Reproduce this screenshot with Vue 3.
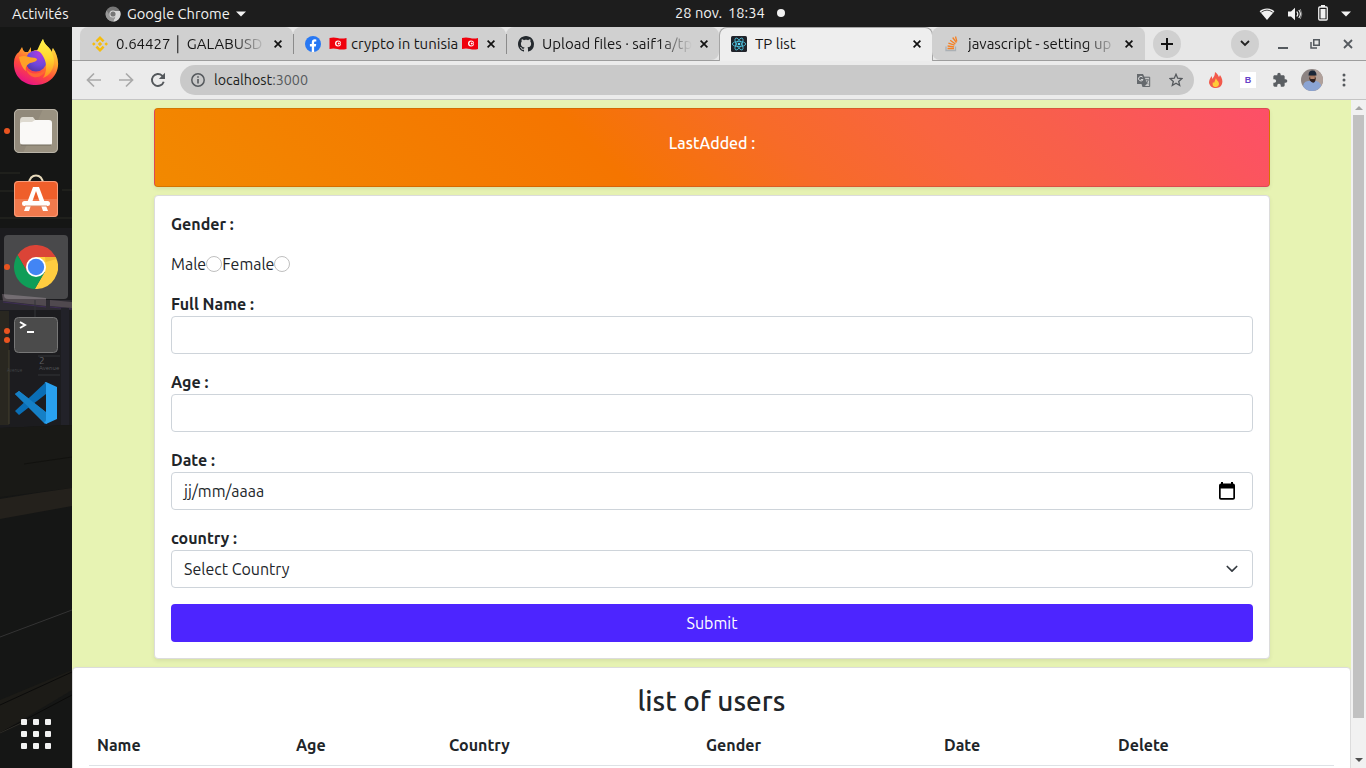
<script setup>
const tabs = [
  { icon: 'binance', title: '0.64427 │ GALABUSD' },
  { icon: 'facebook', title: 'crypto in tunisia', flags: true },
  { icon: 'github', title: 'Upload files · saif1a/tp' },
  { icon: 'react', title: 'TP list', active: true },
  { icon: 'stack', title: 'javascript - setting up' }
]

const columns = [
  { label: 'Name', col: 'c1' },
  { label: 'Age', col: 'c2' },
  { label: 'Country', col: 'c3' },
  { label: 'Gender', col: 'c4' },
  { label: 'Date', col: 'c5' },
  { label: 'Delete', col: 'c6' }
]
</script>

<template>
  <div class="desktop">
    <header class="topbar">
      <span class="activities">Activités</span>
      <svg class="app-icon" width="16" height="16" viewBox="0 0 16 16">
        <circle cx="8" cy="8" r="7.5" fill="#777" />
        <path d="M8 5H15A7.5 7.5 0 0 1 8 15.5L11 9.5z" fill="#d8d8d8" />
        <path d="M1.5 4.5A7.5 7.5 0 0 0 8 15.5L10.5 10 5 9.5z" fill="#999" />
        <circle cx="8" cy="8" r="3.6" fill="#ddd" />
        <circle cx="8" cy="8" r="2.6" fill="#777" />
      </svg>
      <span class="app-name">Google Chrome</span>
      <svg class="app-caret" width="10" height="6" viewBox="0 0 10 6"><path d="M0 .5h10L5 5.5z" fill="#f2f2f2" /></svg>
      <div class="clock">
        <span>28 nov.</span>
        <span class="time">18:34</span>
        <i class="notice"></i>
      </div>
      <div class="tray">
        <svg width="16" height="14" viewBox="0 0 16 14">
          <path d="M.6 4.2C4.7.7 11.3.7 15.4 4.2L8 13z" fill="#f2f2f2" />
          <path d="M2.3 5.2Q8 1 13.7 5.2" fill="none" stroke="#1d1d1d" stroke-width=".8" />
        </svg>
        <svg class="speaker" width="16" height="14" viewBox="0 0 16 14">
          <path d="M1 4.5h3L8 .8v12.4L4 9.5H1z" fill="#f2f2f2" />
          <path d="M9.8 4.5q2 2.500 0 5M11.8 3q3.200 4 0 8" fill="none" stroke="#f2f2f2" stroke-width="1.2" />
          <path d="M13.3 2q3 5 0 10" fill="none" stroke="#888" />
        </svg>
        <svg class="battery" width="10" height="16" viewBox="0 0 10 16">
          <path d="M3 0h4v2H3z" fill="#f2f2f2" />
          <rect x=".75" y="2" width="8.5" height="13" rx="1" fill="none" stroke="#f2f2f2" stroke-width="1.3" />
          <path d="M2.500 4h5v9.500h-5z" fill="#f2f2f2" />
        </svg>
        <svg width="10" height="6" viewBox="0 0 10 6"><path d="M0 .5h10L5 5.5z" fill="#f2f2f2" /></svg>
      </div>
    </header>

    <div class="main">
      <aside class="dock">
        <svg class="wallpaper" width="72" height="741" viewBox="0 27 72 741">
          <rect y="27" width="72" height="741" fill="#151615" />
          <path d="M0 173h20M0 191h16M62 190h10M0 218h72" stroke="#2b2a25" />
          <path d="M0 228H72V425L0 428z" fill="#1c1c1f" />
          <path d="M0 300h72v10H0z" fill="#2d2b31" />
          <path d="M2 294l44 4v8L3 301zM50 300l22 2v6l-22-2z" fill="#50494f" />
          <path d="M3 302l43 5M50 307l22 2" stroke="#3e2d56" />
          <path d="M0 311h9v114H0z" fill="#292720" />
          <path d="M9 350V424" stroke="#45402e" />
          <path d="M61 308h8v117h-8z" fill="#222229" />
          <path d="M35 300v17M38 356h22M38 375h22" stroke="#333439" />
          <text x="39" y="364" font-size="10" fill="#5c5e62">2</text>
          <text x="39" y="370" font-size="6" fill="#54575b">Avenue</text>
          <text x="7" y="372" font-size="4.5" fill="#434548">Avenue</text>
          <path d="M0 428l72-3v63L0 497z" fill="#191916" />
          <path d="M24 464l48-7" stroke="#12120f" />
          <path d="M0 499q35-6 72-11v18L0 519z" fill="#24211c" />
          <path d="M0 637l72-27" stroke="#343434" />
          <path d="M0 700l72-30v20L0 733z" fill="#1c1b17" />
          <path d="M0 705l72-33M0 733l72-38" stroke="#0c0c0b" />
          <path d="M0 733l30-14" stroke="#2e2c27" />
        </svg>
        <div class="launchers">
          <div class="launcher">
            <svg class="firefox" width="46" height="48" viewBox="0 0 46 48">
              <defs>
                <linearGradient id="fxBody" x1=".8" y1="0" x2=".3" y2="1">
                  <stop offset="0" stop-color="#fff04a" /><stop offset=".38" stop-color="#ffa52c" />
                  <stop offset=".68" stop-color="#ff493c" /><stop offset="1" stop-color="#e6108a" />
                </linearGradient>
                <radialGradient id="fxGlobe" cx=".7" cy=".15" r=".9">
                  <stop offset="0" stop-color="#b13ae0" /><stop offset=".6" stop-color="#7047dc" /><stop offset="1" stop-color="#5538a8" />
                </radialGradient>
                <linearGradient id="fxTail" x1=".5" y1="0" x2=".5" y2="1">
                  <stop offset="0" stop-color="#fff34d" /><stop offset=".5" stop-color="#ffd52e" /><stop offset="1" stop-color="#ff8a20" />
                </linearGradient>
              </defs>
              <path d="M9 9c1 2 1 4 3 5l3 0 3-5v5q5-3 9-2C27 7 28 4 30 1c1 6 7 8 9 13 0-2 0-3 1-4 5 7 7 17 3 25-4 8-12 12-20 12C9 47 0 37 1 24c0-4 2-8 5-10z" fill="url(#fxBody)" />
              <circle cx="23" cy="23" r="10.5" fill="url(#fxGlobe)" />
              <path d="M24 13c2-5 4-9 6-12 1 6 7 8 9 14 5 10 0 22-9 25 4-6 4-14 1-20-2-4-4-7-7-7z" fill="url(#fxTail)" />
              <path d="M6 19q5-2 10 0c3 1 6 0 8 2 0 3-4 3-7 4-3 2-5 4-4 8-4-3-6-9-7-14z" fill="#ffa027" />
              <path d="M13 31c4 5 12 7 20 0-3 10-16 12-20 0z" fill="#ff6634" />
            </svg>
          </div>
          <div class="launcher">
            <i class="dot"></i>
            <svg width="46" height="46" viewBox="0 0 46 46">
              <rect x="1" y="1" width="44" height="44" rx="5" fill="#91897a" />
              <path d="M30 1h10q5 0 5 5v34q0 5-5 5H10z" fill="#a09786" opacity=".6" />
              <rect x="1.5" y="1.5" width="43" height="43" rx="4.5" fill="none" stroke="#b9b4a8" />
              <path d="M7 13q0-4 3-4h10l3 4h12v12H7z" fill="#dedad0" />
              <path d="M7 16q0-2 3-2h9l3-2h14q3 0 3 3v20q0 2-3 2H10q-3 0-3-3z" fill="#faf9f7" />
              <path d="M8 37h30" stroke="#716a5d" />
            </svg>
          </div>
          <div class="launcher">
            <svg class="software" width="46" height="46" viewBox="0 0 46 46">
              <path d="M16 11C16-.5 30-.5 30 11" fill="none" stroke="#e7dabb" stroke-width="2" />
              <rect x="1" y="8" width="44" height="36" rx="4" fill="#ef5f2b" />
              <path d="M1 26h44v14q0 4-4 4H5q-4 0-4-4z" fill="#f17a4d" />
              <rect x="1.5" y="8.5" width="43" height="35" rx="3.5" fill="none" stroke="#f79d7b" />
              <path d="M20 14h6l9 24h-5L23 18 16 38h-5z" fill="#fff" />
              <rect x="9" y="28" width="28" height="5" rx="2.5" fill="#fff" />
              <path d="M12 33h22" stroke="#dc8865" />
            </svg>
          </div>
          <div class="launcher focused">
            <i class="dot"></i>
            <svg width="44" height="44" viewBox="0 0 44 44">
              <path d="M3.54 10.03A22 22 0 0 1 41.6 12H22v10l-8.66 5z" fill="#db4437" />
              <path d="M41.6 12A22 22 0 0 1 20.86 43.97L30.66 27 22 22V12z" fill="#ffcd40" />
              <path d="M20.86 43.97A22 22 0 0 1 3.54 10.03L13.34 27 22 22l8.66 5z" fill="#0f9d58" />
              <path d="M31 12h10.6l1 2-11 3z" fill="#e5a92b" opacity=".6" />
              <circle cx="22" cy="22" r="10" fill="#fff" />
              <circle cx="22" cy="22" r="8.2" fill="#4285f4" />
            </svg>
          </div>
          <div class="launcher">
            <i class="dot upper"></i><i class="dot lower"></i>
            <svg width="46" height="46" viewBox="0 0 46 46">
              <rect x="1.5" y="5.5" width="43" height="35" rx="4" fill="#4b4b4b" stroke="#777" />
              <path d="M7 10l5 3-5 3" fill="none" stroke="#fff" stroke-width="2" />
              <path d="M14 20h7" stroke="#fff" stroke-width="2" />
            </svg>
          </div>
          <div class="launcher">
            <svg width="44" height="44" viewBox="0 0 44 44">
              <path d="M1 13l4-3 28 22-2 11z" fill="#1d83cb" />
              <path d="M1 30l4 4 27-21V1z" fill="#0a6eb5" />
              <path d="M1 13l4-3 28 22v11q-2 0-3-2z" fill="#1580c6" />
              <path d="M32 1l11 5v32l-11 5-2-2q2 0 2-2V4q0-3-2-2z" fill="#29a1ef" />
            </svg>
          </div>
        </div>
        <div class="app-grid"><i v-for="n in 9" :key="n"></i></div>
      </aside>

      <section class="browser">
        <div class="tabstrip">
          <div v-for="tab in tabs" :key="tab.icon" class="tab" :class="{ active: tab.active }">
            <svg v-if="tab.icon === 'binance'" width="16" height="16" viewBox="0 0 16 16" fill="#f5bc0c">
              <path d="M8 0l4.500 4.500-1.800 1.800L8 3.600 5.300 6.300 3.500 4.500zM8 16l4.500-4.500-1.800-1.800L8 12.400 5.300 9.700l-1.800 1.800zM1.800 6.200L3.600 8 1.800 9.800 0 8zM14.200 6.200L16 8l-1.800 1.800L12.400 8zM8 5.800L10.200 8 8 10.200 5.800 8z" />
            </svg>
            <svg v-else-if="tab.icon === 'facebook'" width="16" height="16" viewBox="0 0 16 16">
              <circle cx="8" cy="8" r="8" fill="#2878f3" />
              <path d="M6.800 16v-5.500H4.900V8h1.900V6.400c0-2 1.200-3.100 3-3.100l1.500.1v2h-1c-.9 0-1.200.5-1.200 1.200V8h2.100l-.4 2.500H9.100V16z" fill="#fff" />
            </svg>
            <svg v-else-if="tab.icon === 'github'" width="16" height="16" viewBox="0 0 16 16">
              <path d="M8 0C3.580 0 0 3.580 0 8c0 3.540 2.290 6.530 5.470 7.590.4.070.55-.17.55-.38 0-.19-.01-.82-.01-1.490-2.010.37-2.530-.49-2.690-.94-.09-.23-.48-.94-.82-1.130-.28-.15-.68-.52-.01-.53.63-.01 1.080.58 1.230.82.72 1.210 1.870.87 2.330.66.07-.52.28-.87.51-1.070-1.780-.2-3.640-.89-3.640-3.950 0-.87.31-1.590.82-2.150-.08-.2-.36-1.020.08-2.120 0 0 .67-.21 2.200.82.64-.18 1.320-.27 2-.27s1.360.09 2 .27c1.530-1.040 2.200-.82 2.200-.82.44 1.100.16 1.920.08 2.120.51.56.82 1.270.82 2.150 0 3.070-1.870 3.750-3.650 3.950.29.25.54.73.54 1.480 0 1.070-.01 1.930-.01 2.200 0 .21.15.46.55.38A8.010 8.010 0 0 0 16 8c0-4.420-3.580-8-8-8z" fill="#24292e" />
            </svg>
            <svg v-else-if="tab.icon === 'react'" width="16" height="16" viewBox="0 0 16 16">
              <rect width="16" height="16" rx="1.5" fill="#20232a" />
              <g fill="none" stroke="#4cc5e2" stroke-width=".8">
                <ellipse cx="8" cy="8" rx="6.7" ry="2.6" />
                <ellipse cx="8" cy="8" rx="6.7" ry="2.6" transform="rotate(60 8 8)" />
                <ellipse cx="8" cy="8" rx="6.7" ry="2.6" transform="rotate(120 8 8)" />
              </g>
              <circle cx="8" cy="8" r="1.3" fill="#61dafb" />
            </svg>
            <svg v-else width="16" height="16" viewBox="0 0 16 16" fill="none">
              <path d="M2 10.5v4h9.500v-4" stroke="#aab0b5" stroke-width="1.3" />
              <path d="M3.500 12.500H10M3.600 10l6.500.8M4.400 7.200l6.100 2M6.200 4.200l5.200 3.800M8.700 1.500l3.700 5.200M11.500.5l1.300 5" stroke="#f48024" stroke-width="1.3" />
            </svg>
            <div class="tab-title">
              <svg v-if="tab.flags" class="flag first" width="18" height="13" viewBox="0 0 18 13">
                <path d="M.5 1q4-1 8 0t9 0v11q-5 1-9 0t-8 0z" fill="#f0000c" />
                <circle cx="9" cy="6.5" r="3" fill="#fff" /><circle cx="9.400" cy="6.5" r="2" fill="#f0000c" /><circle cx="9.8" cy="6.5" r="1" fill="#fff" />
              </svg>
              <span>{{ tab.title }}</span>
              <svg v-if="tab.flags" class="flag last" width="16" height="13" viewBox="0 0 16 13">
                <path d="M0 1q4-1 8 0t8 0v11q-4 1-8 0t-8 0z" fill="#f0000c" />
                <circle cx="9" cy="6.5" r="3" fill="#fff" /><circle cx="9.400" cy="6.5" r="2" fill="#f0000c" /><circle cx="9.8" cy="6.5" r="1" fill="#fff" />
              </svg>
            </div>
            <svg class="close" width="8" height="8" viewBox="0 0 8 8"><path d="M.6.6l6.800 6.800M7.400.6L.6 7.400" stroke="#111" stroke-width="1.7" /></svg>
          </div>
          <div class="round new-tab">
            <svg width="12" height="12" viewBox="0 0 12 12"><path d="M6 0v12M0 6h12" stroke="#111" stroke-width="2" /></svg>
          </div>
          <div class="round tab-search">
            <svg width="10" height="7" viewBox="0 0 10 7"><path d="M1 1l4 4 4-4" fill="none" stroke="#222" stroke-width="1.8" /></svg>
          </div>
          <svg class="win minimize" width="10" height="10" viewBox="0 0 10 10"><path d="M0 9h10" stroke="#555a5f" stroke-width="2" /></svg>
          <svg class="win restore" width="10" height="10" viewBox="0 0 10 10">
            <path d="M3.750.75h5.500v5.500h-5.500zM1 3v6h6" fill="none" stroke="#555a5f" stroke-width="1.5" />
          </svg>
          <svg class="win" width="10" height="10" viewBox="0 0 10 10"><path d="M1 1l8 8M9 1L1 9" stroke="#555a5f" stroke-width="1.8" /></svg>
        </div>

        <div class="toolbar">
          <svg width="16" height="16" viewBox="0 0 16 16"><path d="M15 8H2M8 1.500L1.500 8 8 14.500" fill="none" stroke="#a9a9a9" stroke-width="1.7" /></svg>
          <svg width="16" height="16" viewBox="0 0 16 16"><path d="M1 8h13M8 1.500L14.500 8 8 14.500" fill="none" stroke="#a9a9a9" stroke-width="1.7" /></svg>
          <svg width="16" height="16" viewBox="0 0 16 16">
            <path d="M13.700 9.800a6 6 0 1 1-1.600-6.200l1.900 2" fill="none" stroke="#53575b" stroke-width="1.9" />
            <path d="M15 .8v6.200H8.800z" fill="#53575b" />
          </svg>
          <div class="omnibox">
            <svg width="14" height="14" viewBox="0 0 14 14"><circle cx="7" cy="7" r="6.2" fill="none" stroke="#55595d" stroke-width="1.5" /><path d="M7 6v4.500M7 3.300v1.500" stroke="#55595d" stroke-width="1.6" /></svg>
            <div class="url"><span class="host">localhost</span><span>:3000</span></div>
            <svg class="translate" width="15" height="15" viewBox="0 0 15 15">
              <path d="M1 1h6l1.500 3H13.500V14H6.500L5.500 11H1z" fill="#65696d" />
              <path d="M8.200 4.200h5.500v9.300H7.500l3-2.500z" fill="#c8c8c8" stroke="#65696d" />
              <path d="M6.700 4.200a2.300 2.300 0 1 0 .3 2.400H4.800" fill="none" stroke="#ddd" />
              <path d="M9 6.800h4M11 6v1M12.200 7q-1 3-3 4M9.800 8.500l2.700 2.500" fill="none" stroke="#65696d" stroke-width=".8" />
            </svg>
            <svg class="star" width="14" height="14" viewBox="0 0 14 14"><path d="M7 1.300l1.700 3.900 4.200.4-3.200 2.800 1 4.100L7 10.300l-3.700 2.200 1-4.100L1.100 5.600l4.200-.4z" fill="none" stroke="#55595d" stroke-width="1.3" /></svg>
          </div>
          <svg class="flame" width="14" height="16" viewBox="0 0 14 16">
            <path d="M6 0c4 3 3 4 4 5l1-2c2 3 3 6 2 9-1 3-4 4-6 4-4 0-6-2-7-5 0-3 1-5 3-7v3c2-2 3-4 3-7z" fill="#f2594b" />
            <path d="M7 6c0 2 3 3 3 6 0 2-2 3-3 3-3 0-4-2-3-5l1 1z" fill="#ffcb38" />
          </svg>
          <div class="ext-b">B</div>
          <svg class="puzzle" width="16" height="16" viewBox="0 0 24 24"><path d="M20.500 11H19V7c0-1.100-.9-2-2-2h-4V3.500a2.500 2.500 0 0 0-5 0V5H4c-1.100 0-2 .9-2 2v3.800h1.500a2.700 2.700 0 0 1 0 5.400H2V20c0 1.100.9 2 2 2h3.800v-1.500a2.700 2.700 0 0 1 5.400 0V22H17c1.100 0 2-.9 2-2v-4h1.500a2.500 2.500 0 0 0 0-5z" fill="#5a5e62" /></svg>
          <svg class="avatar" width="22" height="22" viewBox="0 0 22 22">
            <defs><clipPath id="face"><circle cx="11" cy="11" r="11" /></clipPath></defs>
            <g clip-path="url(#face)">
              <path d="M0 0h22v22H0z" fill="#8d8483" /><path d="M14 0h8v22h-8z" fill="#b1a19b" />
              <path d="M2 22q-1-10 5-10l8 0q6 1 6 10z" fill="#8ba4d4" />
              <ellipse cx="11.500" cy="8.500" rx="3.200" ry="4" fill="#9b6c55" />
              <path d="M7.500 6.500q0-5 4-5t4 5z" fill="#1b2637" />
              <path d="M8.300 8.500h6.400q0 6-3.200 5T8.300 8.500z" fill="#30211f" />
              <path d="M9.300 7.500h4.400v2.500H9.300z" fill="#b08068" />
            </g>
          </svg>
          <svg class="kebab" width="4" height="14" viewBox="0 0 4 14" fill="#55595d"><circle cx="2" cy="2" r="1.5" /><circle cx="2" cy="7" r="1.5" /><circle cx="2" cy="12" r="1.5" /></svg>
        </div>

        <div class="viewport">
          <main class="page">
            <div class="card banner">LastAdded :</div>

            <form class="card form">
              <div class="row"><b>Gender :</b></div>
              <div class="row"><span>Male</span><i class="radio"></i><span>Female</span><i class="radio"></i></div>
              <div class="field">
                <b>Full Name :</b>
                <div class="control"></div>
              </div>
              <div class="field">
                <b>Age :</b>
                <div class="control"></div>
              </div>
              <div class="field">
                <b>Date :</b>
                <div class="control">
                  <span>jj/mm/aaaa</span>
                  <svg class="calendar" width="16" height="18" viewBox="0 0 16 18"><path d="M2 0h2v1.500h8V0h2v1.500q2 0 2 2V16q0 1.800-2 1.800H2Q0 17.800 0 16V3.500q0-2 2-2zM1.700 6.500v9.600h12.600V6.500z" fill="#000" fill-rule="evenodd" /></svg>
                </div>
              </div>
              <div class="field">
                <b>country :</b>
                <div class="control">
                  <span>Select Country</span>
                  <svg class="chevron" width="16" height="16" viewBox="0 0 16 16"><path d="M3.300 5.500L8 10.200l4.700-4.700" fill="none" stroke="#343a40" stroke-width="1.7" stroke-linecap="round" stroke-linejoin="round" /></svg>
                </div>
              </div>
              <button type="button" class="submit">Submit</button>
            </form>

            <section class="card users">
              <h2>list of users</h2>
              <table>
                <thead>
                  <tr><th v-for="c in columns" :key="c.label" :class="c.col">{{ c.label }}</th></tr>
                </thead>
              </table>
            </section>
          </main>
          <div class="scrollbar">
            <svg width="8" height="4" viewBox="0 0 8 4"><path d="M0 4L4 0l4 4z" fill="#a3a3a3" /></svg>
            <div class="thumb"></div>
            <svg class="down" width="8" height="4" viewBox="0 0 8 4"><path d="M0 0l4 4 4-4z" fill="#505050" /></svg>
          </div>
        </div>
      </section>
    </div>
  </div>
</template>

<style>
body {
  overflow: hidden;
}
</style>

<style scoped>
* {
  box-sizing: border-box;
}
.desktop {
  width: 1366px;
  height: 768px;
  overflow: hidden;
  display: flex;
  flex-direction: column;
  font-family: "Ubuntu", "Open Sans", "Noto Sans", sans-serif;
  font-size: 16px;
  line-height: 24px;
  color: #212529;
}
span, b {
  white-space: nowrap;
  flex: none;
}
svg {
  display: block;
  flex: none;
}
.topbar {
  position: relative;
  height: 27px;
  flex: none;
  display: flex;
  align-items: center;
  padding: 0 15px 0 12px;
  background: #1d1d1d;
  color: #f2f2f2;
  font-size: 14.67px;
}
.activities {
  width: 58px;
}
.app-icon {
  margin-left: 35px;
}
.app-name {
  width: 104px;
  margin-left: 6px;
}
.app-caret {
  margin-left: 5px;
}
.clock {
  position: absolute;
  left: 675px;
  top: 1px;
  display: flex;
  align-items: center;
}
.clock span {
  width: 45px;
}
.clock .time {
  width: 36px;
  margin-left: 8px;
}
.notice {
  width: 8px;
  height: 8px;
  margin-left: 13px;
  border-radius: 50%;
  background: #f2f2f2;
}
.tray {
  margin-left: auto;
  display: flex;
  align-items: center;
}
.speaker {
  margin-left: 12px;
}
.battery {
  margin: 0 13px 1px 15px;
}
.main {
  flex: 1;
  min-height: 0;
  display: flex;
}
.dock {
  position: relative;
  width: 72px;
  flex: none;
}
.wallpaper {
  position: absolute;
  left: 0;
  top: 0;
}
.launchers {
  position: relative;
  padding-top: 2px;
}
.launcher {
  position: relative;
  height: 68px;
  display: flex;
  align-items: center;
  justify-content: center;
}
.firefox {
  margin-bottom: 2px;
}
.software {
  margin-top: -6px;
}
.focused::before {
  content: "";
  position: absolute;
  inset: 2px 4px;
  border-radius: 4px;
  background: rgba(255, 255, 255, 0.2);
}
.focused svg {
  position: relative;
}
.dot {
  position: absolute;
  left: 4px;
  top: 31px;
  width: 6px;
  height: 6px;
  border-radius: 50%;
  background: #e95420;
}
.dot.upper {
  top: 27px;
}
.dot.lower {
  top: 36px;
}
.app-grid {
  position: absolute;
  left: 21px;
  bottom: 19px;
  display: grid;
  grid-template-columns: repeat(3, 6px);
  gap: 6px;
}
.app-grid i {
  height: 6px;
  border-radius: 1px;
  background: #f2f2f2;
}
.browser {
  flex: 1;
  min-width: 0;
  display: flex;
  flex-direction: column;
}
.tabstrip {
  height: 34px;
  flex: none;
  display: flex;
  align-items: center;
  padding: 0 13px 0 8px;
  background: #e7e7e7;
  border-bottom: 1px solid #9d9d9d;
}
.tab {
  position: relative;
  width: 213px;
  height: 33px;
  flex: none;
  display: flex;
  align-items: center;
  padding: 0 11px 0 12px;
  background: #d0d0d0;
  border-radius: 8px 8px 0 0;
  font-size: 15px;
  color: #161616;
}
.tab:nth-child(2)::before,
.tab:nth-child(3)::before {
  content: "";
  position: absolute;
  left: 0;
  top: 7px;
  width: 1px;
  height: 20px;
  background: #8b8b8b;
}
.tab:nth-child(3) {
  border-bottom-right-radius: 8px;
}
.tab:nth-child(5) {
  border-bottom-left-radius: 8px;
  padding-right: 12px;
}
.tab.active {
  width: 214px;
  height: 34px;
  margin-right: -1px;
  margin-bottom: -1px;
  background: #eee;
  border: 1px solid #a5a5a5;
  border-bottom: 0;
  padding: 0 11px 2px;
}
.tab-title {
  display: flex;
  align-items: center;
  width: 150px;
  margin-left: 8px;
  overflow: hidden;
  -webkit-mask-image: linear-gradient(90deg, #000 78%, transparent);
  mask-image: linear-gradient(90deg, #000 78%, transparent);
}
.tab:nth-child(2) .tab-title,
.tab.active .tab-title {
  width: 152px;
  -webkit-mask-image: none;
  mask-image: none;
}
.flag.first {
  margin-right: 4px;
}
.flag.last {
  margin-left: 4px;
}
.close {
  margin-left: auto;
}
.round {
  width: 28px;
  height: 28px;
  flex: none;
  border-radius: 50%;
  background: #d0d0d0;
  display: flex;
  align-items: center;
  justify-content: center;
}
.new-tab {
  margin-left: 8px;
}
.tab-search {
  margin-left: auto;
}
.win {
  margin-left: 23px;
}
.minimize {
  margin-left: 19px;
}
.restore {
  margin-left: 22px;
}
.toolbar {
  height: 39px;
  flex: none;
  display: flex;
  align-items: center;
  padding: 0 20px 0 14px;
  background: #ebebeb;
  border-bottom: 1px solid #c4c4c4;
}
.toolbar > svg:nth-child(2),
.toolbar > svg:nth-child(3) {
  margin-left: 16px;
}
.omnibox {
  width: 1014px;
  height: 30px;
  flex: none;
  margin-left: 14px;
  padding: 0 11px;
  display: flex;
  align-items: center;
  border-radius: 15px;
  background: #c9c9c9;
}
.url {
  display: flex;
  margin-left: 9px;
  font-size: 14.3px;
  color: #56595c;
}
.host {
  color: #1c1e20;
}
.translate {
  margin-left: auto;
}
.star {
  margin-left: 18px;
}
.flame {
  margin-left: 15px;
}
.ext-b {
  width: 16px;
  height: 16px;
  margin-left: 17px;
  background: #fff;
  color: #6642c8;
  font: bold 9px/16px "Liberation Sans", sans-serif;
  text-align: center;
}
.puzzle {
  margin-left: 16px;
}
.avatar {
  margin-left: 13px;
}
.kebab {
  margin-left: auto;
}
.viewport {
  flex: 1;
  min-height: 0;
  display: flex;
}
.page {
  width: 1279px;
  flex: none;
  padding-top: 8px;
  background: #e7f3b3;
  overflow: hidden;
}
.card {
  border: 1px solid #dcdcdc;
  border-radius: 4px;
  background-color: #fff;
  box-shadow: 0 2px 4px rgba(0, 0, 0, 0.075);
}
.banner {
  height: 79px;
  margin: 0 81px 0 82px;
  padding-top: 22px;
  text-align: center;
  font-weight: 500;
  color: #fff;
  border-color: rgba(0, 0, 0, 0.125);
  background-image: linear-gradient(45deg, #f28900, #f57500 40%, #f76b28 56%, #f96440 70%, #f85f4b 80%, #fd4f68);
}
.form {
  height: 464px;
  margin: 8px 81px 0 82px;
  padding: 16px;
}
b {
  font-weight: 700;
}
.row {
  display: flex;
  align-items: center;
  height: 24px;
  margin-bottom: 16px;
}
.radio {
  width: 16px;
  height: 16px;
  border: 1px solid #bfbfbf;
  border-radius: 50%;
}
.field {
  margin-bottom: 16px;
}
.field b {
  display: block;
}
.control {
  height: 38px;
  display: flex;
  align-items: center;
  padding: 0 12px;
  border: 1px solid #ced4da;
  border-radius: 4px;
}
.calendar {
  margin-left: auto;
  margin-right: 5px;
}
.chevron {
  margin-left: auto;
}
.submit {
  display: block;
  width: 100%;
  height: 38px;
  border: 0;
  border-radius: 4px;
  background: #4d25ff;
  color: #fff;
  font: inherit;
}
.users {
  height: 140px;
  margin-top: 8px;
  padding: 16px;
}
h2 {
  margin: 0 0 8px;
  font-size: 28px;
  line-height: 33px;
  font-weight: 500;
  text-align: center;
}
table {
  width: 1245px;
  table-layout: fixed;
  border-collapse: separate;
  border-spacing: 0;
}
th {
  height: 41px;
  padding: 8px;
  border-bottom: 1px solid #dee2e6;
  text-align: left;
  font-weight: 700;
}
.c1 { width: 199px; }
.c2 { width: 153px; }
.c3 { width: 257px; }
.c4 { width: 238px; }
.c5 { width: 174px; }
.c6 { width: 224px; }
.scrollbar {
  width: 15px;
  flex: none;
  display: flex;
  flex-direction: column;
  align-items: center;
  padding-top: 6px;
  background: #f1f1f1;
}
.thumb {
  width: 11px;
  height: 603px;
  margin-top: 5px;
  background: #c1c1c1;
}
.down {
  margin-top: 40px;
}
</style>
